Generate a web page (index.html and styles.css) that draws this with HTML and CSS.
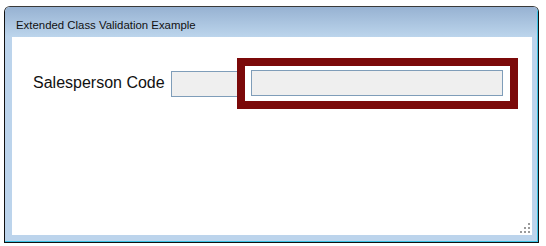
FILE: index.html
```html
<!DOCTYPE html>
<html lang="en">
<head>
    <meta charset="UTF-8">
    <meta name="viewport" content="width=device-width, initial-scale=1.0">
    <title>Extended Class Validation Example</title>
    <link rel="stylesheet" href="styles.css">
</head>
<body>
    <div class="window">
        <div class="window-inner">
            <div class="titlebar">Extended Class Validation Example</div>
            <div class="frame">
                <div class="client">
                    <div class="field-row">
                        <label class="field-label" for="code">Salesperson Code</label>
                        <div class="textbox textbox-short"></div>
                        <div class="highlight">
                            <input id="code" class="textbox textbox-long" type="text">
                        </div>
                    </div>
                    <!-- resize grip -->
                    <svg class="grip" width="10" height="10" viewBox="0 0 10 10">
                        <rect x="8" y="0" width="2" height="2"/>
                        <rect x="4" y="4" width="2" height="2"/>
                        <rect x="8" y="4" width="2" height="2"/>
                        <rect x="0" y="8" width="2" height="2"/>
                        <rect x="4" y="8" width="2" height="2"/>
                        <rect x="8" y="8" width="2" height="2"/>
                    </svg>
                </div>
            </div>
        </div>
    </div>
</body>
</html>
```

FILE: styles.css
```css
body {
    margin: 0;
    padding: 6px 0 0 4px;
    background: #fff;
    font-family: "Liberation Sans", Arial, sans-serif;
}
.window {
    width: 535px;
    box-sizing: border-box;
    border: 1px solid #111;
    border-top-color: #3a3a3a;
    border-radius: 6px 6px 0 0;
    overflow: hidden;
}
.window-inner {
    background: #bcd4ec;
    border-right: 1px solid #3cc3e4;
    border-bottom: 1px solid #3cc3e4;
}
.titlebar {
    height: 30px;
    box-sizing: border-box;
    padding: 11px 0 0 11px;
    background: linear-gradient(#97b2d2, #bcd5ec);
    font-size: 11.4px;
    line-height: 14px;
    color: #111;
}
.frame {
    padding: 0 5px 6px 7px;
}
.client {
    position: relative;
    height: 198px;
    background: #fff;
    padding: 21px 0 0 21px;
    box-sizing: border-box;
}
.field-row {
    display: flex;
    align-items: center;
}
.field-label {
    width: 138px;
    font-size: 16px;
    color: #111;
    padding-bottom: 1px;
}
.textbox {
    height: 26px;
    box-sizing: border-box;
    border: 1px solid #7f9db9;
    background: #efefef;
}
.textbox-short {
    width: 70px;
}
.highlight {
    margin-left: -4px;
    width: 281px;
    height: 51px;
    box-sizing: border-box;
    border: 8px solid #7b0909;
    background: #fff;
    padding: 4px 0 0 6px;
}
.textbox-long {
    display: block;
    width: 252px;
    margin: 0;
    padding: 0;
    outline: none;
}
.grip {
    position: absolute;
    right: 2px;
    bottom: 2px;
    fill: #9a9a9a;
}
```
